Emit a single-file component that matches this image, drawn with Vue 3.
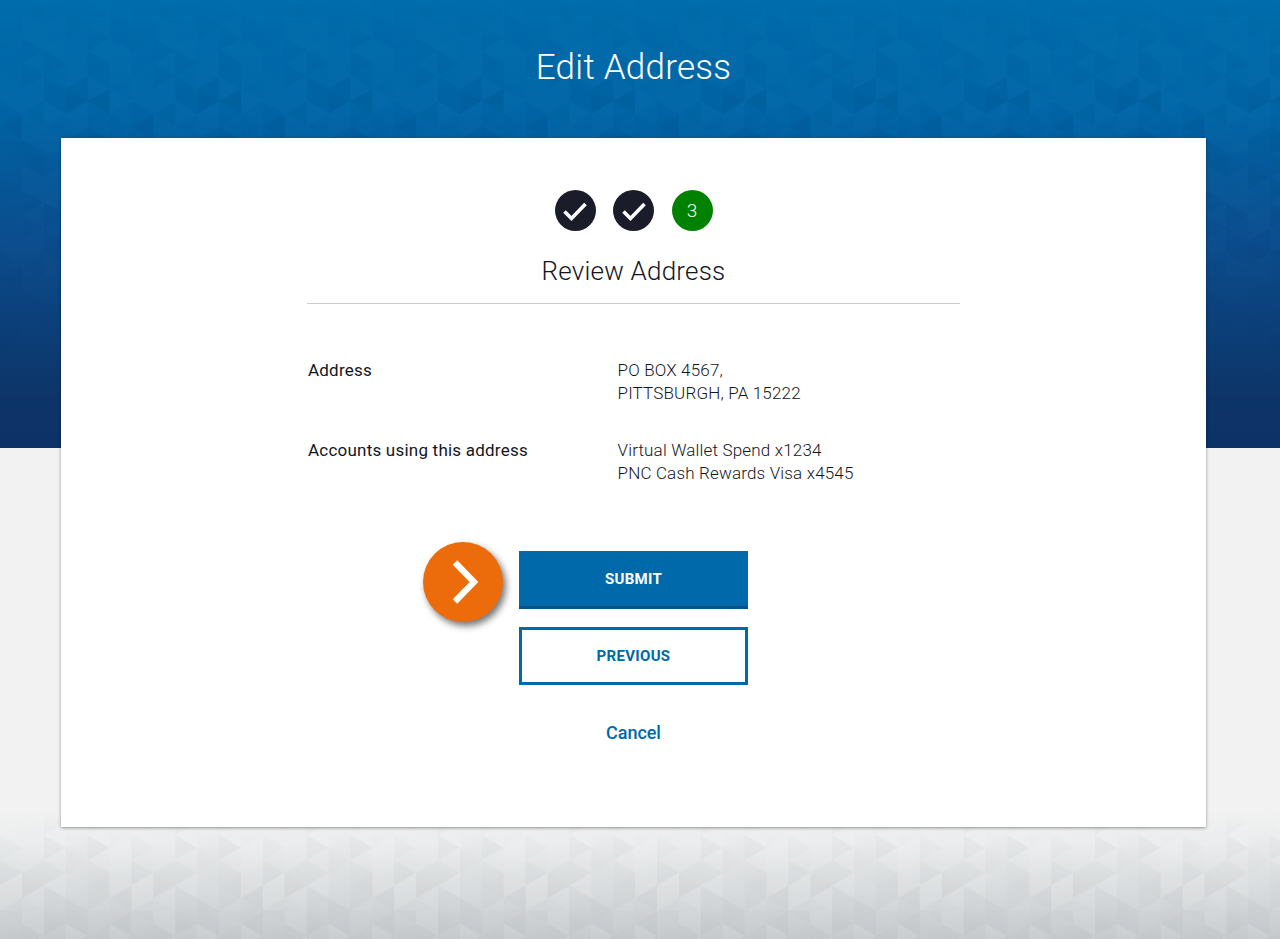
<template>
  <div class="page">
    <!-- Background artwork: triangle texture over the two gradient bands -->
    <svg class="texture" width="1280" height="939" aria-hidden="true">
      <defs>
        <pattern id="tile-blue" width="131.4" height="151.8" patternUnits="userSpaceOnUse">
          <polygon v-for="(t, i) in blueTile" :key="i" :points="t.points" :fill="t.fill" :fill-opacity="t.opacity" />
        </pattern>
        <pattern id="tile-grey" width="131.4" height="151.8" patternUnits="userSpaceOnUse">
          <polygon v-for="(t, i) in greyTile" :key="i" :points="t.points" :fill="t.fill" :fill-opacity="t.opacity" />
        </pattern>
        <linearGradient id="fade-blue" x1="0" y1="0" x2="0" y2="1">
          <stop offset="0" stop-color="#fff" stop-opacity="0.1" />
          <stop offset="0.22" stop-color="#fff" stop-opacity="1" />
          <stop offset="0.5" stop-color="#fff" stop-opacity="0.7" />
          <stop offset="0.8" stop-color="#fff" stop-opacity="0" />
        </linearGradient>
        <linearGradient id="fade-grey" x1="0" y1="0" x2="0" y2="1">
          <stop offset="0" stop-color="#fff" stop-opacity="0" />
          <stop offset="0.3" stop-color="#fff" stop-opacity="1" />
          <stop offset="1" stop-color="#fff" stop-opacity="1" />
        </linearGradient>
        <mask id="mask-blue"><rect width="1280" height="448" fill="url(#fade-blue)" /></mask>
        <mask id="mask-grey"><rect y="805" width="1280" height="134" fill="url(#fade-grey)" /></mask>
      </defs>
      <rect width="1280" height="448" fill="url(#tile-blue)" mask="url(#mask-blue)" />
      <rect y="805" width="1280" height="134" fill="url(#tile-grey)" mask="url(#mask-grey)" />
    </svg>

    <header class="banner">
      <h1 class="banner-title">Edit Address</h1>
    </header>

    <main class="card">
      <ol class="steps">
        <li class="step done">
          <svg width="26" height="24" viewBox="0 0 26 24" fill="none">
            <path d="M2.5 12.5l7 7L23.5 5" stroke="#fff" stroke-width="3.6" />
          </svg>
        </li>
        <li class="step done">
          <svg width="26" height="24" viewBox="0 0 26 24" fill="none">
            <path d="M2.5 12.5l7 7L23.5 5" stroke="#fff" stroke-width="3.6" />
          </svg>
        </li>
        <li class="step current">3</li>
      </ol>

      <h2 class="section-title">Review Address</h2>

      <dl class="details">
        <div v-for="row in rows" :key="row.label" class="detail-row">
          <dt>{{ row.label }}</dt>
          <dd>
            <div v-for="line in row.lines" :key="line">{{ line }}</div>
          </dd>
        </div>
      </dl>

      <div class="actions">
        <span class="hint" aria-hidden="true">
          <svg width="28" height="46" viewBox="0 0 28 46" fill="none">
            <path d="M4 3.5L23 23 4 42.5" stroke="#fff" stroke-width="6.2" />
          </svg>
        </span>
        <button class="btn btn-primary" type="button">SUBMIT</button>
        <button class="btn btn-secondary" type="button">PREVIOUS</button>
        <a class="cancel" href="#">Cancel</a>
      </div>
    </main>
  </div>
</template>

<script setup>
const rows = [
  { label: 'Address', lines: ['PO BOX 4567,', 'PITTSBURGH, PA 15222'] },
  { label: 'Accounts using this address', lines: ['Virtual Wallet Spend x1234', 'PNC Cash Rewards Visa x4545'] }
]

// Seeded triangle tile, so the texture comes out the same on every load
function makeTile(seed, pick) {
  let s = seed
  const rand = () => {
    s = (s * 16807) % 2147483647
    return s / 2147483647
  }
  const w = 21.9
  const h = 25.3
  const out = []
  for (let c = 0; c < 6; c++) {
    const leftOff = c % 2 ? h / 2 : 0
    const rightOff = c % 2 ? 0 : h / 2
    const x0 = c * w
    const x1 = (c + 1) * w
    for (let r = -1; r < 7; r++) {
      const a = leftOff + r * h
      const b = rightOff + r * h
      out.push({ points: `${x0},${a} ${x0},${a + h} ${x1},${b + (c % 2 ? h : 0)}`, ...pick(rand()) })
      out.push({ points: `${x1},${b} ${x1},${b + h} ${x0},${a + (c % 2 ? 0 : h)}`, ...pick(rand()) })
    }
  }
  return out
}

const blueTile = makeTile(4711, (v) =>
  v < 0.5
    ? { fill: '#fff', opacity: (v * 0.035).toFixed(3) }
    : { fill: '#00204f', opacity: ((v - 0.5) * 0.16).toFixed(3) }
)
const greyTile = makeTile(902, (v) =>
  v < 0.55
    ? { fill: '#fff', opacity: (v * 0.24).toFixed(3) }
    : { fill: '#8b9297', opacity: ((v - 0.55) * 0.14).toFixed(3) }
)
</script>

<style>
html,
body {
  margin: 0;
  background: #f2f2f2;
}
</style>

<style scoped>
.page {
  position: relative;
  width: 1280px;
  height: 939px;
  overflow: hidden;
  font-family: Roboto, "Liberation Sans", sans-serif;
  color: #14161d;
  background:
    linear-gradient(#006dac 0, #0066a7 110px, #0b4f90 230px, #0d3468 400px, #0d3268 448px, transparent 448px),
    linear-gradient(#f2f2f2 810px, #e9ebec 845px, #c6cacd 939px);
}

.texture {
  position: absolute;
  top: 0;
  left: 0;
}

.banner {
  position: relative;
  height: 138px;
  width: 1267px;
  display: flex;
  justify-content: center;
}

.banner-title {
  margin: 0;
  padding-top: 47px;
  font-size: 35px;
  line-height: 41px;
  font-weight: 300;
  letter-spacing: 0.25px;
  color: #fff;
}

.card {
  position: relative;
  box-sizing: border-box;
  width: 1145px;
  height: 689px;
  margin-left: 61px;
  padding-top: 52px;
  display: flex;
  flex-direction: column;
  align-items: center;
  background: #fff;
  box-shadow: 0 1px 3px rgba(0, 0, 0, 0.4);
}

.steps {
  display: flex;
  gap: 17.5px;
  margin: 0;
  padding: 0;
  list-style: none;
}

.step {
  width: 41px;
  height: 41px;
  border-radius: 50%;
  display: flex;
  align-items: center;
  justify-content: center;
  color: #fff;
  font-size: 19px;
  font-weight: 300;
}

.step.done {
  background: #1a1c2a;
}

.step.current {
  background: #008200;
}

.section-title {
  box-sizing: border-box;
  width: 653px;
  height: 73px;
  margin: 0;
  padding-top: 24px;
  text-align: center;
  font-size: 26px;
  line-height: 32px;
  font-weight: 300;
  letter-spacing: 0.2px;
  border-bottom: 1px solid #cccccc;
}

.details {
  box-sizing: border-box;
  width: 653px;
  margin: 0;
  padding: 55px 0 0 1px;
  display: flex;
  flex-direction: column;
  gap: 34px;
  font-size: 17px;
  line-height: 23px;
}

.detail-row {
  display: flex;
}

.detail-row dt {
  width: 309.5px;
  font-weight: 400;
  letter-spacing: 0.22px;
}

.detail-row dd {
  margin: 0;
  font-weight: 300;
  letter-spacing: 0.17px;
}

.actions {
  position: relative;
  display: flex;
  flex-direction: column;
  align-items: center;
  margin-top: 66px;
}

.hint {
  position: absolute;
  top: -9px;
  left: -96px;
  width: 80px;
  height: 80px;
  border-radius: 50%;
  display: flex;
  align-items: center;
  justify-content: center;
  background: #ec6b0a;
  box-shadow: 3px 4px 7px rgba(0, 0, 0, 0.55);
}

.hint svg {
  margin-left: 3px;
}

.btn {
  box-sizing: border-box;
  width: 229px;
  height: 58px;
  border-radius: 0;
  font-family: inherit;
  font-size: 15px;
  font-weight: 700;
  letter-spacing: 0.3px;
  cursor: pointer;
}

.btn-primary {
  border: none;
  border-bottom: 3px solid #00548a;
  background: #0069aa;
  color: #fff;
}

.btn-secondary {
  margin-top: 18px;
  border: 3px solid #0069aa;
  background: #fff;
  color: #0069aa;
}

.cancel {
  margin-top: 36px;
  font-size: 18px;
  line-height: 24px;
  font-weight: 500;
  letter-spacing: -0.05px;
  color: #0069aa;
  text-decoration: none;
}
</style>
